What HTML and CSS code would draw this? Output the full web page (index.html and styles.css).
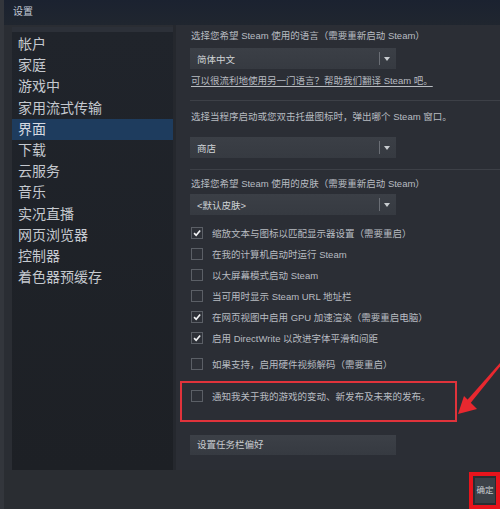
FILE: index.html
```html
<!DOCTYPE html>
<html lang="zh-CN">
<head>
<meta charset="utf-8">
<title>设置</title>
<link rel="stylesheet" href="styles.css">
</head>
<body>
<div class="window">
  <div class="titlebar">设置</div>
  <div class="middle">
    <nav class="sidebar">
      <div class="nav-item">帐户</div>
      <div class="nav-item">家庭</div>
      <div class="nav-item">游戏中</div>
      <div class="nav-item">家用流式传输</div>
      <div class="nav-item active">界面</div>
      <div class="nav-item">下载</div>
      <div class="nav-item">云服务</div>
      <div class="nav-item">音乐</div>
      <div class="nav-item">实况直播</div>
      <div class="nav-item">网页浏览器</div>
      <div class="nav-item">控制器</div>
      <div class="nav-item">着色器预缓存</div>
    </nav>
    <main class="main">
      <div class="label l1">选择您希望 Steam 使用的语言（需要重新启动 Steam）</div>
      <div class="dropdown d1"><span class="dd-text">简体中文</span><span class="dd-sep"></span><span class="dd-arrow"></span></div>
      <div class="label link">可以很流利地使用另一门语言？帮助我们翻译 Steam 吧。</div>
      <div class="rule r1"></div>
      <div class="label l2">选择当程序启动或您双击托盘图标时，弹出哪个 Steam 窗口。</div>
      <div class="dropdown d2"><span class="dd-text">商店</span><span class="dd-sep"></span><span class="dd-arrow"></span></div>
      <div class="rule r2"></div>
      <div class="label l3">选择您希望 Steam 使用的皮肤（需要重新启动 Steam）</div>
      <div class="dropdown d3"><span class="dd-text">&lt;默认皮肤&gt;</span><span class="dd-sep"></span><span class="dd-arrow"></span></div>
      <div class="checks">
        <div class="check-row"><span class="box checked"><svg viewBox="0 0 12 12"><polyline points="2.5,6.2 5,8.8 9.8,3" /></svg></span><span>缩放文本与图标以匹配显示器设置（需要重启）</span></div>
        <div class="check-row"><span class="box"></span><span>在我的计算机启动时运行 Steam</span></div>
        <div class="check-row"><span class="box"></span><span>以大屏幕模式启动 Steam</span></div>
        <div class="check-row"><span class="box"></span><span>当可用时显示 Steam URL 地址栏</span></div>
        <div class="check-row"><span class="box checked"><svg viewBox="0 0 12 12"><polyline points="2.5,6.2 5,8.8 9.8,3" /></svg></span><span>在网页视图中启用 GPU 加速渲染（需要重启电脑）</span></div>
        <div class="check-row"><span class="box checked"><svg viewBox="0 0 12 12"><polyline points="2.5,6.2 5,8.8 9.8,3" /></svg></span><span>启用 DirectWrite 以改进字体平滑和间距</span></div>
      </div>
      <div class="check-row hw"><span class="box"></span><span>如果支持，启用硬件视频解码（需要重启）</span></div>
      <div class="highlight">
        <div class="check-row"><span class="box"></span><span>通知我关于我的游戏的变动、新发布及未来的发布。</span></div>
      </div>
      <div class="taskbar-btn">设置任务栏偏好</div>
      <svg class="arrow" width="50" height="60" viewBox="0 0 50 60">
        <polygon points="50,3 50,6.5 19,45 15.5,42" fill="#e8282f" />
        <polygon points="8,54 27,49 14,36" fill="#e8282f" />
      </svg>
    </main>
  </div>
  <div class="footer">
    <div class="ok-mark"><div class="ok-btn">确定</div></div>
  </div>
</div>
</body>
</html>
```
FILE: styles.css
```css
* { box-sizing: border-box; }
html, body { margin: 0; padding: 0; }
body {
  width: 500px;
  height: 509px;
  overflow: hidden;
  background: #2a2d33;
  font-family: "Liberation Sans", "Noto Sans CJK SC", sans-serif;
}
.window {
  width: 500px;
  height: 509px;
  display: flex;
  flex-direction: column;
  border-left: 4px solid #33363c;
  background: #2a2d33;
}
.titlebar {
  height: 25px;
  flex: none;
  padding-left: 9px;
  font-size: 10px;
  line-height: 24px;
  color: #c3cad6;
  background: linear-gradient(180deg, #1b2230 0%, #20262f 100%);
}
.middle {
  flex: none;
  height: 445px;
  display: flex;
}
.sidebar {
  flex: none;
  width: 161px;
  margin-left: 8px;
  margin-top: 2px;
  border-top: 5px solid #2c3038;
  padding-top: 2px;
  background: linear-gradient(180deg, #20242b 0%, #1d2025 100%);
}
.nav-item {
  height: 21.2px;
  line-height: 21px;
  padding-left: 6px;
  font-size: 14px;
  color: #c5c9cf;
  white-space: nowrap;
}
.nav-item.active {
  background: #1e3c5e;
  color: #d6dbe2;
}
.main {
  position: relative;
  flex: 1;
  padding-left: 15px;
  padding-top: 4px;
  background: #2b2e35;
  font-size: 9.5px;
  color: #b8bcc1;
  border-left: 3px solid #25282e;
}
.label {
  height: 14px;
  line-height: 14px;
  white-space: nowrap;
}
.dropdown {
  width: 206px;
  height: 21px;
  margin-left: -1px;
  display: flex;
  align-items: center;
  background: linear-gradient(180deg, #3b3f46 0%, #363a41 100%);
  color: #d0d4d8;
}
.dd-text { flex: 1; padding-left: 7px; }
.dd-sep {
  width: 1px;
  height: 13px;
  background: #6a6e75;
}
.dd-arrow {
  width: 16px;
  height: 21px;
  position: relative;
}
.dd-arrow::after {
  content: "";
  position: absolute;
  left: 4px;
  top: 9px;
  border-left: 3.5px solid transparent;
  border-right: 3.5px solid transparent;
  border-top: 4px solid #c8ccd0;
}
.d1 { margin-top: 5px; }
.link {
  margin-top: 5px;
  text-decoration: underline;
  text-underline-offset: 2px;
}
.rule {
  height: 1px;
  margin-left: -1px;
  background: #3d4047;
}
.r1 { margin-top: 12px; }
.l2 { margin-top: 9px; }
.d2 { margin-top: 13px; }
.r2 { margin-top: 11px; }
.l3 { margin-top: 7px; }
.d3 { margin-top: 3px; }
.checks { margin-top: 7px; }
.check-row {
  height: 21px;
  display: flex;
  align-items: center;
  gap: 9px;
  white-space: nowrap;
}
.box {
  flex: none;
  width: 12px;
  height: 12px;
  border: 1px solid #5b5f66;
  background: #2d3037;
  display: flex;
}
.box svg {
  width: 10px;
  height: 10px;
  fill: none;
  stroke: #f2f3f5;
  stroke-width: 2;
}
.hw { margin-top: 5px; }
.highlight {
  width: 277px;
  height: 41px;
  margin-top: 7px;
  margin-left: -11px;
  border: 2px solid #e0333b;
  padding-left: 9px;
  padding-top: 2px;
}
.taskbar-btn {
  width: 206px;
  height: 20px;
  margin-top: 13px;
  margin-left: -1px;
  padding-left: 7px;
  line-height: 20px;
  color: #c8ccd0;
  background: linear-gradient(180deg, #3c4047 0%, #363a41 100%);
}
.arrow {
  position: absolute;
  right: 0;
  top: 335px;
}
.footer {
  flex: 1;
  display: flex;
  justify-content: flex-end;
  align-items: flex-start;
  background: #2a2d32;
}
.ok-mark {
  margin-top: 2px;
  border: 4px solid #e8141c;
  padding: 2px 1px 2px 2px;
}
.ok-btn {
  width: 20px;
  height: 25px;
  line-height: 25px;
  text-align: center;
  font-size: 8.5px;
  color: #c9cdd2;
  background: #3c4148;
}
```
